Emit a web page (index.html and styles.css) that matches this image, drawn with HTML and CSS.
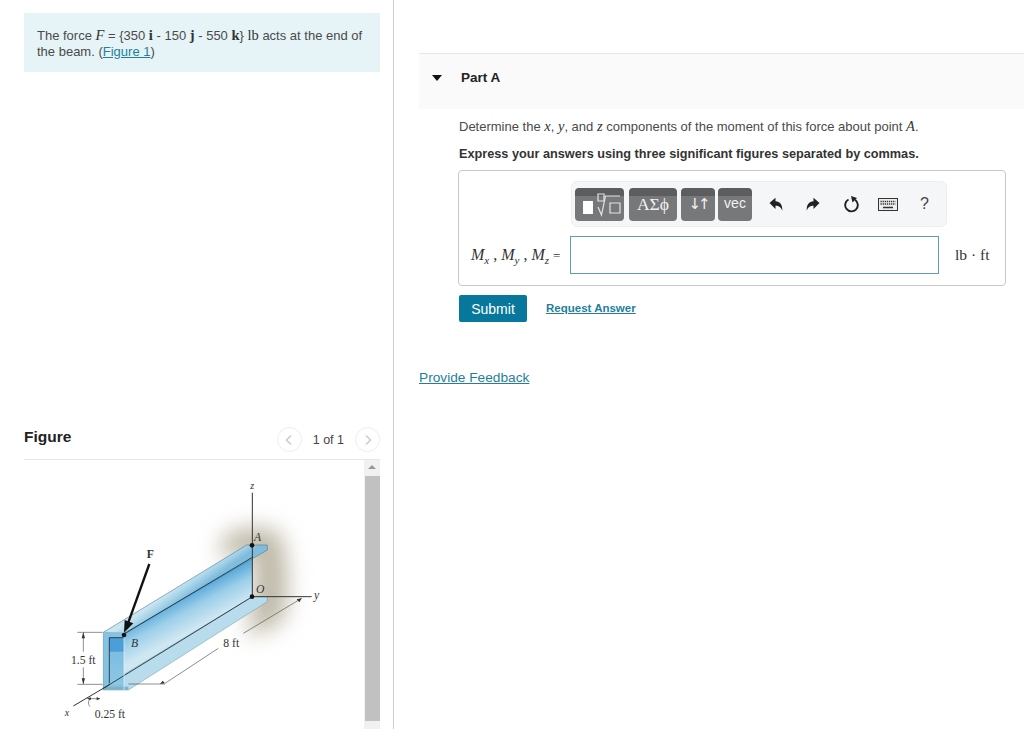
FILE: index.html
```html
<!DOCTYPE html>
<html lang="en">
<head>
<meta charset="utf-8">
<title>Part A</title>
<link rel="stylesheet" href="styles.css">
</head>
<body>
<div class="page">
  <aside class="left">
    <div class="prompt">The force <i class="m">F</i> = {350 <b class="m">i</b> - 150 <b class="m">j</b> - 550 <b class="m">k</b>} <span class="m">lb</span> acts at the end of the beam. (<a href="#">Figure 1</a>)</div>
    <section class="figure">
      <header class="fig-head">
        <h2>Figure</h2>
        <div class="pager">
          <span class="circle"><svg width="10" height="12" viewBox="0 0 10 12"><path d="M7 1.500 2.500 6 7 10.500" fill="none" stroke="#ccc" stroke-width="1.600"/></svg></span>
          <span class="count">1 of 1</span>
          <span class="circle"><svg width="10" height="12" viewBox="0 0 10 12"><path d="M3 1.500 7.500 6 3 10.500" fill="none" stroke="#ccc" stroke-width="1.600"/></svg></span>
        </div>
      </header>
      <div class="fig-body">
        <div class="fig-img">
          <svg class="beam" width="290" height="259" viewBox="0 0 870 777">
            <defs>
              <filter id="bl" x="-40%" y="-40%" width="180%" height="180%"><feGaussianBlur stdDeviation="34"/></filter>
              <linearGradient id="web" gradientUnits="userSpaceOnUse" x1="400" y1="385" x2="445" y2="470">
                <stop offset="0" stop-color="#62aedd"/>
                <stop offset="0.4" stop-color="#9ccfe9"/>
                <stop offset="1" stop-color="#cfe7f2"/>
              </linearGradient>
              <linearGradient id="fl" gradientUnits="userSpaceOnUse" x1="380" y1="350" x2="405" y2="385">
                <stop offset="0" stop-color="#c9e5f1"/>
                <stop offset="0.5" stop-color="#a6d3e8"/>
                <stop offset="1" stop-color="#7fbddd"/>
              </linearGradient>
              <linearGradient id="sec" gradientUnits="userSpaceOnUse" x1="0" y1="503" x2="0" y2="640">
                <stop offset="0" stop-color="#4a9fd8"/>
                <stop offset="0.3" stop-color="#4a9fd8"/>
                <stop offset="0.31" stop-color="#7dbde1"/>
                <stop offset="1" stop-color="#8cc6e4"/>
              </linearGradient>
            </defs>
            <path d="M520 200 Q610 150 690 190 Q725 300 705 440 Q640 500 590 490 L610 390 L610 250 L510 270Z" fill="#bdb8a6" filter="url(#bl)"/>
            <path d="M222 488 607 260V380L222 615Z" fill="url(#web)"/>
            <path d="M160 487 590 225H652V240L222 490Z" fill="url(#fl)" stroke="#3a6a80" stroke-width="1.500"/>
            <path d="M178 640 607 380H652V395L235 660H160Z" fill="#b8dcec" stroke="#4d8299" stroke-width="1.200"/>
            <path d="M160 487 222 490V503H178V640H222V660H160Z" fill="#86c3e2"/>
            <path d="M178 503H222V640H178Z" fill="url(#sec)"/>
            <path d="M160 650H235V660H160Z" fill="#7fb2c9"/>
            <path d="M222 492 607 262M160 655 607 380M178 503V640M178 503H222" stroke="#1e2d36" stroke-width="2.600" fill="none"/>
            <path d="M222 497V660" stroke="#eaf5fa" stroke-width="2" fill="none"/>
            <path d="M160 487V660" stroke="#4d8299" stroke-width="1.500" fill="none"/>
            <path d="M607 68V380M607 380H785M70 708 180 643" stroke="#333" stroke-width="3" fill="none"/>
            <path d="M298 282 234 460" stroke="#111" stroke-width="7" fill="none"/>
            <path d="M222 488 224 450 250 460Z" fill="#111"/>
            <circle cx="222" cy="495" r="7" fill="#111"/>
            <circle cx="606" cy="226" r="7" fill="#111"/>
            <circle cx="606" cy="380" r="7" fill="#111"/>
            <path d="M100 487V545M100 592V643M82 487H158M82 643H158" stroke="#444" stroke-width="1.800" fill="none"/>
            <path d="M100 487 95 505H105ZM100 643 95 625H105Z" fill="#333"/>
            <path d="M235 642H345M345 640 505 535M580 490 755 385" stroke="#555" stroke-width="2" fill="none"/>
            <path d="M345 640 330 642 338 632ZM755 385 740 388 748 397Z" fill="#333"/>
            <path d="M112 686H150M120 710C112 700 116 690 122 686" stroke="#444" stroke-width="1.800" fill="none"/>
            <path d="M150 686 140 681V691ZM112 686 122 681V691Z" fill="#333"/>
            <g class="fig-t">
              <text x="290" y="263" class="b">F</text>
              <text x="243" y="532" class="i">B</text>
              <text x="612" y="212" class="i">A</text>
              <text x="618" y="368" class="i">O</text>
              <text x="601" y="58" class="i sm">z</text>
              <text x="792" y="388" class="i">y</text>
              <text x="44" y="737" class="i sm">x</text>
              <text x="520" y="532">8 ft</text>
              <text x="63" y="581">1.5 ft</text>
              <text x="134" y="743">0.25 ft</text>
            </g>
          </svg>
        </div>
        <div class="scrollbar">
          <span class="arrow"></span>
          <span class="thumb"></span>
        </div>
      </div>
    </section>
  </aside>
  <main class="right">
    <div class="part-head"><span class="tri"></span><h3>Part A</h3></div>
    <div class="part-body">
      <p class="q">Determine the <i class="m">x</i>, <i class="m">y</i>, and <i class="m">z</i> components of the moment of this force about point <i class="m">A</i>.</p>
      <p class="ins">Express your answers using three significant figures separated by commas.</p>
      <div class="answer">
        <div class="toolbar">
          <span class="tb w49"><svg width="49" height="33" viewBox="0 0 49 33"><rect x="8" y="13" width="10" height="13" fill="#fff"/><path d="M23 6h6v7h-6z" fill="none" stroke="#e4e4e4" stroke-width="1.200"/><path d="M23 19l3.500 8 4-19h14.500" fill="none" stroke="#e4e4e4" stroke-width="1.200"/><path d="M35 15h10v10H35z" fill="none" stroke="#e4e4e4" stroke-width="1.200"/></svg></span>
          <span class="tb w48 serif">ΑΣϕ</span>
          <span class="tb w34 arrows">↓↑</span>
          <span class="tb w34 vec">vec</span>
          <span class="tools">
            <svg class="ti" width="14" height="15" viewBox="0 0 14 15"><path d="M.5 6 6.500 .8v3.500c4.500.2 7 3 6.800 9.500-1.300-3.500-3-5-6.800-5V12Z" fill="#222"/></svg>
            <svg class="ti" width="14" height="15" viewBox="0 0 14 15"><path d="M13.500 6 7.500 .8v3.500C3 4.500.5 7.300.7 13.800c1.300-3.500 3-5 6.800-5V12Z" fill="#222"/></svg>
            <svg class="ti" width="16" height="18" viewBox="0 0 16 18"><path d="M5.500 4.500a6.300 6.300 0 1 0 6.500 .3" fill="none" stroke="#222" stroke-width="1.900"/><path d="M8 1 14 3 9.500 7.500Z" fill="#222"/></svg>
            <svg class="ti" width="20" height="13" viewBox="0 0 20 13"><rect x=".5" y=".5" width="19" height="12" fill="#eee" stroke="#333"/><path d="M2.500 3.500h15M2.500 6h15" stroke="#333" stroke-width="1.500" stroke-dasharray="1.300 .8"/><path d="M5 9.500h10" stroke="#333" stroke-width="1.500"/></svg>
            <span class="help">?</span>
          </span>
        </div>
        <div class="row">
          <span class="lbl"><i>M<sub>x</sub></i> , <i>M<sub>y</sub></i> , <i>M<sub>z</sub></i> <small>=</small></span>
          <input class="inp" type="text" aria-label="answer">
          <span class="unit">lb · ft</span>
        </div>
      </div>
      <div class="actions">
        <button class="submit" type="button">Submit</button>
        <a class="req" href="#">Request Answer</a>
      </div>
    </div>
    <a class="fb" href="#">Provide Feedback</a>
  </main>
</div>
</body>
</html>
```
FILE: styles.css
```css
* { box-sizing: border-box; }
html, body { margin: 0; height: 100%; overflow: hidden; background: #fff; }
body { font-family: "Liberation Sans", Arial, sans-serif; font-size: 13px; color: #4a4a4a; }
.page { display: flex; height: 729px; }
.m { font-family: "Liberation Serif", serif; font-size: 14.500px; line-height: 1; color: #333; }
a { color: #1f7f9c; }

.left { width: 394px; flex: none; border-right: 1px solid #c6ced6; padding: 13px 13px 0 24px; display: flex; flex-direction: column; }
.prompt { background: #e6f4f7; padding: 15px 13px 12px; line-height: 16px; height: 59px; }
.figure { margin-top: 354px; flex: 1; min-height: 0; display: flex; flex-direction: column; }
.fig-head { display: flex; align-items: flex-start; justify-content: space-between; height: 34px; border-bottom: 1px solid #e6e6e6; flex: none; }
.fig-head h2 { margin: 2px 0 0; font-size: 15.500px; line-height: 18px; font-weight: 700; color: #222; }
.pager { display: flex; align-items: center; margin-top: 1px; }
.circle { width: 25px; height: 25px; border: 1px solid #eee; border-radius: 50%; display: flex; align-items: center; justify-content: center; }
.count { margin: 1px 11px 0; color: #444; font-size: 12.500px; }
.fig-body { flex: 1; min-height: 0; display: flex; }
.fig-img { flex: 1; min-width: 0; overflow: hidden; padding: 10px 0 0 26px; }
.beam { display: block; }
.fig-t text { font-family: "Liberation Serif", serif; font-size: 35px; fill: #333; }
.fig-t .b { font-weight: 700; }
.fig-t .i { font-style: italic; }
.fig-t .sm { font-size: 30px; }
.scrollbar { width: 16px; flex: none; background: #f1f1f1; display: flex; flex-direction: column; align-items: center; }
.arrow { width: 0; height: 0; margin-top: 5px; border: 4px solid transparent; border-top: 0; border-bottom: 4px solid #999; }
.thumb { width: 15px; height: 245px; margin-top: 7px; background: #c1c1c1; }

.right { flex: 1; min-width: 0; padding: 53px 0 0 25px; }
.part-head { height: 56px; background: #fafafa; border-top: 1px solid #e8e8e8; display: flex; align-items: center; padding: 0 0 8px 13px; }
.tri { width: 0; height: 0; border: 5.500px solid transparent; border-bottom: 0; border-top: 6px solid #111; margin-right: 19px; }
.part-head h3 { margin: 0; font-size: 13.500px; font-weight: 700; color: #222; }
.part-body { padding-left: 40px; }
.q { margin: 10px 0 0; line-height: 16px; }
.ins { margin: 11px 0 0; line-height: 16px; font-weight: 700; color: #333; font-size: 12.700px; }
.answer { margin: 8px 18px 0 -1px; height: 116px; border: 1px solid #c8c8c8; border-radius: 4px; padding: 10px 0 0; }
.toolbar { margin-left: 112px; width: 376px; height: 46px; background: #f5f6f7; border: 1px solid #eceded; border-radius: 6px; display: flex; align-items: center; padding-left: 3px; gap: 4px; }
.tb { height: 33px; border-radius: 4px; background: linear-gradient(#5c5d5f 8px, #77787a 8px); color: #f2f2f2; display: flex; align-items: center; justify-content: center; font-size: 14px; flex: none; }
.w49 { width: 49px; margin-right: 1px; }
.w48 { width: 48px; }
.w34 { width: 34px; }
.vec { margin-left: -1px; font-size: 14px; padding-bottom: 2px; }
.serif { font-family: "Liberation Serif", serif; font-size: 17.500px; }
.arrows { font-family: "DejaVu Sans", sans-serif; font-size: 15px; letter-spacing: -3px; }
.tools { display: flex; align-items: center; flex: 1; margin-left: 13px; }
.ti { flex: none; margin-right: 23px; }
.ti:nth-child(3) { margin-right: 19px; }
.ti:nth-child(4) { margin-right: 22px; }
.help { font-size: 16px; color: #444; }
.row { display: flex; align-items: center; margin-top: 9px; padding-left: 12px; }
.lbl { width: 99px; font-family: "Liberation Serif", serif; font-size: 16px; white-space: nowrap; color: #333; flex: none; }
.lbl sub { font-size: 11px; line-height: 0; }
.lbl small { font-size: 13px; }
.inp { width: 369px; height: 38px; border: 1px solid #5f9fb4; background: #fff; padding: 0; flex: none; }
.unit { margin-left: 16px; font-family: "Liberation Serif", serif; font-size: 15.500px; color: #333; white-space: nowrap; }
.actions { display: flex; align-items: center; margin-top: 9px; }
.submit { width: 68px; height: 27px; border: 0; border-radius: 2px; background: #07789c; color: #fff; font: 14px "Liberation Sans", Arial, sans-serif; padding: 0; }
.req { margin-left: 19px; font-size: 11.500px; font-weight: 700; margin-top: -2px; }
.fb { display: inline-block; margin-top: 48px; font-size: 13.700px; line-height: 16px; }
```
